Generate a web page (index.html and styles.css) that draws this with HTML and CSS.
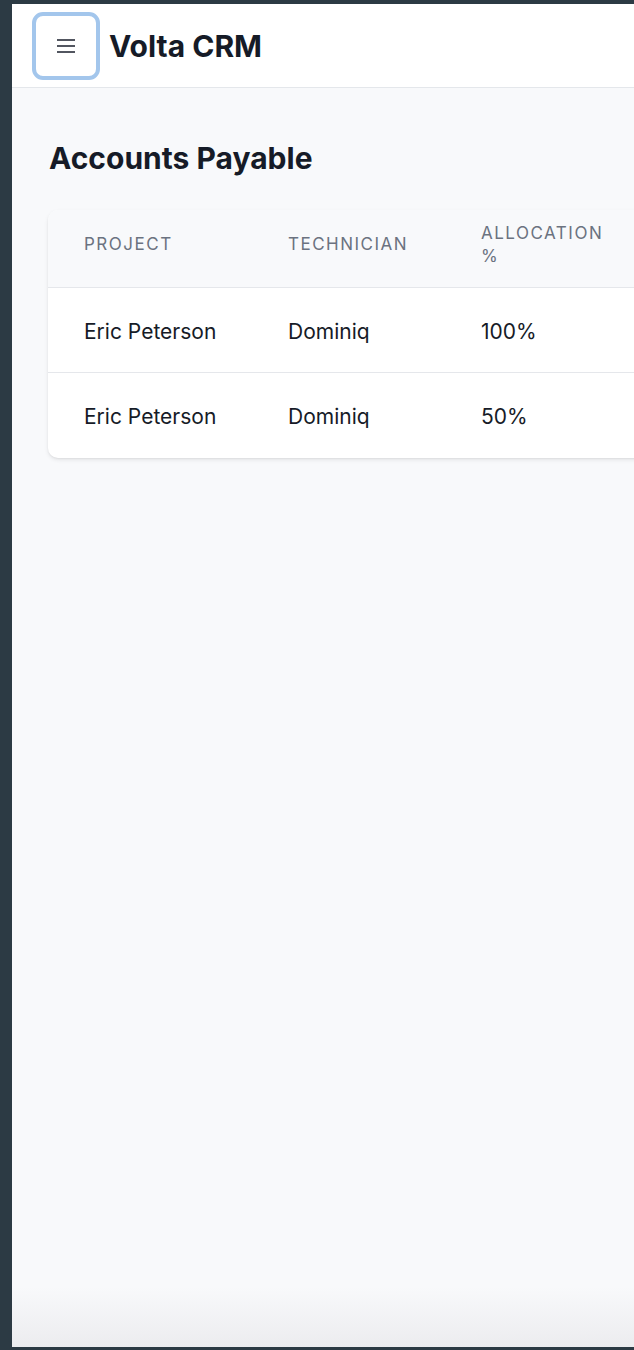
FILE: index.html
```html
<!DOCTYPE html>
<html lang="en">
<head>
<meta charset="utf-8">
<title>Volta CRM</title>
<link rel="stylesheet" href="styles.css">
</head>
<body>
<div class="app">
  <header class="topbar">
    <button class="menu-btn" aria-label="Menu">
      <svg width="20" height="20" viewBox="0 0 20 20" fill="none" stroke="#1a1f2c" stroke-width="1.6" stroke-linecap="butt">
        <path d="M1 4h18M1 10h18M1 16h18"/>
      </svg>
    </button>
    <h1 class="brand">Volta CRM</h1>
  </header>
  <main class="content">
    <h2 class="page-title">Accounts Payable</h2>
    <div class="card">
      <div class="table">
        <div class="row head">
          <div class="cell c1">PROJECT</div>
          <div class="cell c2">TECHNICIAN</div>
          <div class="cell c3">ALLOCATION %</div>
        </div>
        <div class="row">
          <div class="cell c1">Eric Peterson</div>
          <div class="cell c2">Dominiq</div>
          <div class="cell c3">100%</div>
        </div>
        <div class="row last">
          <div class="cell c1">Eric Peterson</div>
          <div class="cell c2">Dominiq</div>
          <div class="cell c3">50%</div>
        </div>
      </div>
    </div>
  </main>
</div>
</body>
</html>
```
FILE: styles.css
```css
html, body {
  margin: 0;
  padding: 0;
  height: 100%;
}
body {
  background: #2c3a44;
  font-family: Inter, "Noto Sans", "Liberation Sans", sans-serif;
  color: #161b27;
  overflow: hidden;
}
.app {
  margin: 4px 0 0 12px;
  height: 1343px;
  display: flex;
  flex-direction: column;
  background: #f8f9fb;
  overflow: hidden;
}
.topbar {
  height: 84px;
  box-sizing: border-box;
  background: #ffffff;
  border-bottom: 1px solid #e4e7eb;
  display: flex;
  align-items: center;
  padding-left: 20px;
  gap: 9px;
  flex-shrink: 0;
}
.menu-btn {
  width: 68px;
  height: 68px;
  box-sizing: border-box;
  border: 4px solid #a3c6ec;
  border-radius: 11px;
  background: #ffffff;
  display: flex;
  align-items: center;
  justify-content: center;
  padding: 0;
}
.brand {
  margin: 0;
  font-size: 30px;
  font-weight: 700;
  color: #161b27;
}
.content {
  flex: 1;
  padding: 52px 0 0 36px;
  background: linear-gradient(to bottom, #f8f9fb calc(100% - 60px), #ececef 100%);
}
.page-title {
  margin: 0 0 34px 1px;
  font-size: 30px;
  font-weight: 700;
  line-height: 36px;
  color: #161b27;
}
.card {
  width: 800px;
  background: #ffffff;
  border-radius: 10px;
  box-shadow: 0 2px 4px rgba(0,0,0,0.08), 0 1px 2px rgba(0,0,0,0.05);
  overflow: hidden;
}
.row {
  display: grid;
  grid-template-columns: 204px 193px 202px 1fr;
  border-bottom: 1px solid #e5e7eb;
  box-sizing: border-box;
  height: 85px;
  align-items: center;
}
.row.last {
  border-bottom: none;
}
.row.head {
  background: #f8f9fb;
  height: 78px;
}
.cell {
  padding: 3px 36px 0;
  font-size: 21px;
  line-height: 26px;
  color: #161b27;
  white-space: nowrap;
}
.head .cell {
  padding: 0 36px 8px;
  font-size: 17px;
  letter-spacing: 1.5px;
  line-height: 23px;
  color: #6b7280;
  font-weight: 400;
  white-space: normal;
}
```
